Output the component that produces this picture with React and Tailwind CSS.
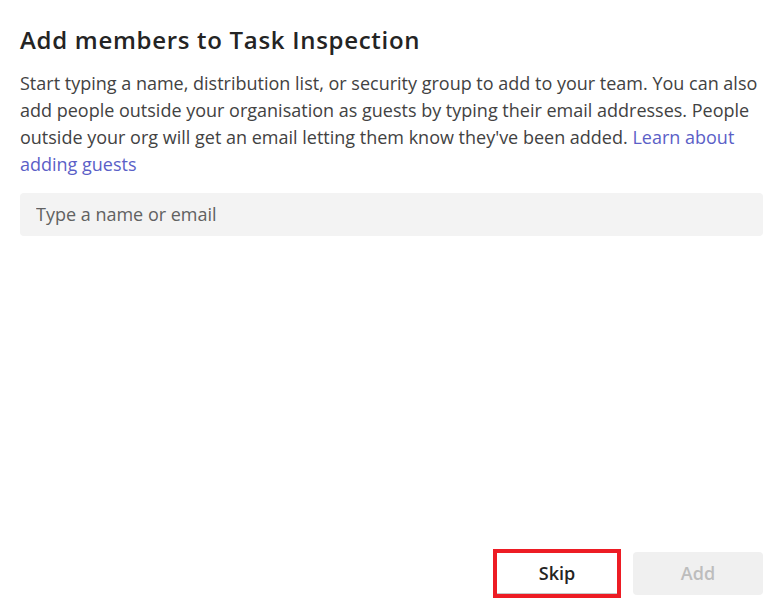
import React from 'react';

export default function App() {
    return (
        <div
            className="h-[615px] w-[783px] bg-white flex flex-col px-[20px] pt-[24px] pb-[17px] text-[#242424] font-['Open_Sans',sans-serif]"
        >
            {/* Header */}
            <h1 className="text-[24px] font-semibold leading-[32px] tracking-[0.7px]">Add members to Task Inspection</h1>

            <p className="mt-[14px] text-[18px] leading-[27px] text-[#424242]">
                Start typing a name, distribution list, or security group to add to your team. You can also<br />
                add people outside your organisation as guests by typing their email addresses. People<br />
                outside your org will get an email letting them know they've been added.{' '}
                <a href="#" className="text-[#5b5fc7]">Learn about<br />adding guests</a>
            </p>

            {/* Search */}
            <div className="mt-[15px] h-[43px] rounded-[4px] bg-[#f3f3f3] flex items-center pl-[16px]">
                <input
                    placeholder="Type a name or email"
                    className="w-full bg-transparent outline-none text-[18px] placeholder:text-[#616161]"
                />
            </div>

            {/* Footer */}
            <div className="mt-auto flex justify-end items-center gap-[12px]">
                <div className="border-[4px] border-[#ed1c24]">
                    <button className="w-[120px] h-[41px] bg-white border-b border-[#c7c7c7] text-[18px] font-semibold text-[#242424]">
                        Skip
                    </button>
                </div>
                <button
                    disabled
                    className="w-[130px] h-[43px] rounded-[4px] bg-[#f0f0f0] text-[18px] font-semibold text-[#bdbdbd]"
                >
                    Add
                </button>
            </div>
        </div>
    );
}
